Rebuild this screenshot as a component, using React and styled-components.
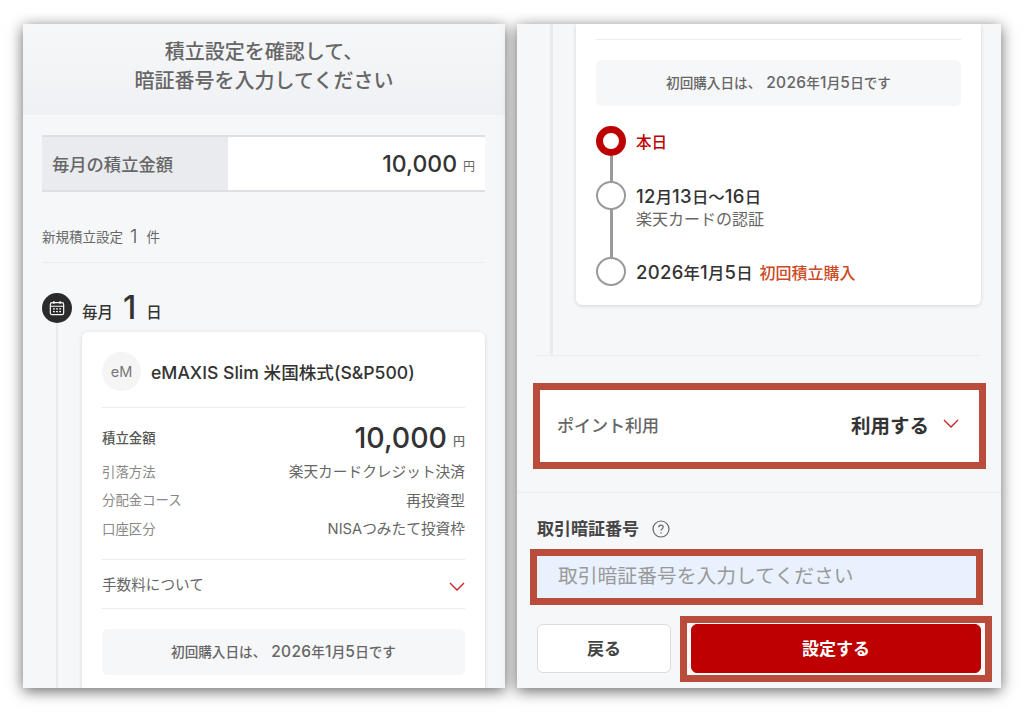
import React from "react";
import styled, { createGlobalStyle } from "styled-components";

const GlobalStyle = createGlobalStyle`
  html, body {
    margin: 0;
    padding: 0;
    background: #fff;
  }
  body {
    font-family: "Inter", "Noto Sans CJK JP", sans-serif;
    color: #333;
  }
  * {
    box-sizing: border-box;
  }
`;

const Page = styled.div`
  display: flex;
  gap: 12px;
  width: 1024px;
  height: 712px;
  padding: 24px 23px;
  overflow: hidden;
`;

const Panel = styled.div`
  position: relative;
  width: ${(p) => p.$width}px;
  height: 664px;
  flex: none;
  background: #f6f7f9;
  box-shadow: 0 3px 14px rgba(0, 0, 0, 0.6);
  overflow: hidden;
`;

const Shot = styled.div`
  height: 100%;
  overflow: hidden;
`;

const Header = styled.div`
  height: 91px;
  padding-top: 14px;
  text-align: center;
  font-size: 20px;
  line-height: 29px;
  font-weight: 500;
  color: #666;
  background: linear-gradient(#f6f7f9, #f0f1f4);
`;

const Body = styled.div`
  padding: 20px 20px 0 19px;
`;

const Summary = styled.div`
  display: flex;
  height: 57px;
  border-top: 2px solid #dedfe2;
  border-bottom: 2px solid #dedfe2;
  background: #fff;
`;

const SummaryLabel = styled.div`
  display: flex;
  align-items: center;
  width: 186px;
  padding-left: 10px;
  background: #e9ebee;
  font-size: 17.3px;
  font-weight: 500;
  color: #666;
`;

const SummaryValue = styled.div`
  flex: 1;
  display: flex;
  align-items: center;
  justify-content: flex-end;
  gap: 6px;
  padding-right: 10px;
`;

const Amount = styled.span`
  font-size: ${(p) => p.$size}px;
  font-weight: 500;
  color: #333;
`;

const Yen = styled.span`
  font-size: 12px;
  color: #666;
  margin-top: ${(p) => p.$top}px;
`;

const CountRow = styled.div`
  display: flex;
  align-items: center;
  height: 49px;
  margin-top: 22px;
  padding-bottom: 4px;
  border-bottom: 1px solid #ebecee;
  font-size: 13.5px;
  color: #666;
`;

const CountNum = styled.span`
  font-size: 19px;
  font-weight: 300;
  color: #555;
  margin: 0 9px 0 7px;
`;

const DayRow = styled.div`
  display: flex;
  align-items: center;
  margin-top: 30px;
  height: 30px;
`;

const DayIcon = styled.div`
  width: 30px;
  height: 30px;
  border-radius: 50%;
  background: #2b2b2b;
  display: flex;
  align-items: center;
  justify-content: center;
`;

const DayText = styled.span`
  font-size: 15.5px;
  font-weight: 500;
  color: #333;
  margin-top: 6px;
  margin-left: ${(p) => p.$left || 0}px;
`;

const DayNum = styled.span`
  font-size: 32px;
  font-weight: 500;
  line-height: 30px;
  color: #333;
  margin: 0 10px;
`;

const Rail = styled.div`
  margin-left: 14px;
  border-left: ${(p) => p.$width}px solid #e9eaec;
  padding: ${(p) => p.$top}px 0 ${(p) => p.$bottom}px ${(p) => p.$left}px;
`;

const Card = styled.div`
  background: #fff;
  border-radius: ${(p) => (p.$clipped ? "0 0 6px 6px" : "6px")};
  box-shadow: 0 1px 4px rgba(0, 0, 0, 0.14);
  padding: ${(p) => p.$top}px 20px 20px;
`;

const FundHead = styled.div`
  display: flex;
  align-items: center;
  gap: 10px;
  padding-bottom: 16px;
  border-bottom: 1px solid #ebecee;
`;

const Avatar = styled.div`
  width: 39px;
  height: 39px;
  border-radius: 50%;
  background: #f5f5f6;
  display: flex;
  align-items: center;
  justify-content: center;
  font-size: 14.5px;
  color: #777;
`;

const FundName = styled.div`
  font-size: 17.6px;
  font-weight: 500;
  color: #333;
`;

const Specs = styled.div`
  padding: 12.5px 0 17px;
  border-bottom: 1px solid #ebecee;
`;

const SpecRow = styled.div`
  display: flex;
  justify-content: space-between;
  align-items: center;
  height: ${(p) => (p.$strong ? 36 : 28.5)}px;
  padding-bottom: ${(p) => (p.$strong ? 3 : 0)}px;
  font-size: 13.4px;
  color: ${(p) => (p.$strong ? "#555" : "#888")};
  font-weight: ${(p) => (p.$strong ? 500 : 400)};
`;

const SpecValue = styled.span`
  font-size: 14.7px;
  color: #666;
`;

const Right = styled.span`
  display: flex;
  align-items: center;
  gap: 6px;
`;

const FeeRow = styled.div`
  display: flex;
  justify-content: space-between;
  align-items: center;
  height: 49px;
  padding-bottom: 2px;
  border-bottom: 1px solid #ebecee;
  font-size: 14.6px;
  color: #666;
`;

const Notice = styled.div`
  display: flex;
  align-items: center;
  justify-content: center;
  gap: 5px;
  height: 46px;
  margin-top: 20px;
  padding-bottom: 3px;
  border-radius: 6px;
  background: #f6f7f9;
  font-size: 13.6px;
  font-weight: 500;
  color: #666;
`;

const NoticeDate = styled.span`
  --digit-size: 15.5px;
`;

const Num = styled.span`
  font-size: var(--digit-size);
  letter-spacing: 0.3px;
`;

const Divider = styled.div`
  border-top: 1px solid #ebecee;
`;

const Steps = styled.div`
  margin-top: 20px;
`;

const Step = styled.div`
  display: flex;
  height: ${(p) => p.$height}px;
`;

const StepMark = styled.div`
  display: flex;
  flex-direction: column;
  align-items: center;
  width: 30px;
  margin-right: 10px;
`;

const Dot = styled.div`
  width: 30px;
  height: ${(p) => (p.$active ? 30 : 29)}px;
  flex: none;
  border-radius: 50%;
  background: #fff;
  border: ${(p) => (p.$active ? "7px solid #bd0000" : "2.5px solid #999")};
`;

const StepLine = styled.div`
  flex: 1;
  width: 3px;
  background: #999;
`;

const StepText = styled.div`
  padding-top: ${(p) => p.$top}px;
`;

const StepDate = styled.span`
  --digit-size: 18.5px;
  font-size: ${(p) => p.$size || 16.4}px;
  line-height: 22px;
  font-weight: 500;
  color: ${(p) => p.$color || "#333"};
  margin-right: ${(p) => p.$gap || 0}px;
`;

const StepNote = styled.div`
  font-size: 16px;
  line-height: 22px;
  color: #666;
`;

const PointSection = styled.div`
  margin: 0 20px 0 19px;
  border-bottom: 1px solid #ebecee;
`;

const PointRow = styled.div`
  position: relative;
  display: flex;
  align-items: center;
  justify-content: space-between;
  height: 72px;
  margin: 34px 0 0 23px;
  width: 439px;
  padding: 0 20px 4px 17px;
  background: #fff;
`;

const Frame = styled.div`
  position: absolute;
  inset: ${(p) => p.$inset};
  border: 7px solid #b94c3a;
  pointer-events: none;
`;

const PointLabel = styled.span`
  font-size: 17px;
  font-weight: 500;
  color: #666;
`;

const PointValue = styled.span`
  display: flex;
  align-items: center;
  gap: 14px;
  font-size: 19.5px;
  font-weight: 700;
  color: #333;
`;

const ChevronWrap = styled.span`
  display: flex;
  margin-top: ${(p) => p.$shift}px;
`;

const AuthSection = styled.div`
  margin-top: 30px;
  border-top: 1px solid #ebecee;
  padding: 23px 20px 0;
`;

const AuthLabel = styled.div`
  display: flex;
  align-items: center;
  gap: 13px;
  font-size: 17px;
  font-weight: 700;
  line-height: 26px;
  color: #444;
`;

const PinField = styled.div`
  position: relative;
  height: 42px;
  margin-top: 14px;
  margin-right: 5px;
  padding: 0 0 6px 21px;
  display: flex;
  align-items: center;
  background: #e8f1fd;
  font-size: 19.8px;
  color: #999;
`;

const Buttons = styled.div`
  display: flex;
  gap: 20px;
  margin-top: 26px;
`;

const Button = styled.div`
  position: relative;
  display: flex;
  align-items: center;
  justify-content: center;
  flex: ${(p) => (p.$primary ? 1 : "none")};
  width: ${(p) => (p.$primary ? "auto" : "134px")};
  height: 49px;
  padding-bottom: 2px;
  border-radius: 6px;
  border: 1px solid ${(p) => (p.$primary ? "#bd0000" : "#dcdcdc")};
  background: ${(p) => (p.$primary ? "#bd0000" : "#fff")};
  box-shadow: ${(p) => (p.$primary ? "0 0 0 6px #f9f9fa" : "none")};
  color: ${(p) => (p.$primary ? "#fff" : "#444")};
  font-size: 17px;
  font-weight: 700;
`;

const Chevron = ({ shift }) => (
  <ChevronWrap $shift={shift}>
    <svg width="16" height="9" viewBox="0 0 16 9" fill="none">
      <path d="M1 1l7 7 7-7" stroke="#c8201e" strokeWidth="1.3" />
    </svg>
  </ChevronWrap>
);

const CalendarIcon = () => (
  <svg width="16" height="16" viewBox="0 0 18 18" fill="none" stroke="#fff" strokeWidth="1.3">
    <rect x="1.5" y="3" width="15" height="13.5" rx="2" />
    <path d="M1.5 7h15M5.5 1v3.5M12.5 1v3.5" />
    <path d="M4.5 10h2M8 10h2M11.5 10h2M4.5 13h2M8 13h2M11.5 13h2" />
  </svg>
);

const HelpIcon = () => (
  <svg width="18" height="18" viewBox="0 0 18 18" fill="none" stroke="#666" strokeWidth="1.2">
    <circle cx="9" cy="9" r="8" />
    <path d="M6.8 7.2c0-1.3 1-2.1 2.2-2.1s2.2.8 2.2 2c0 1.8-2.2 1.7-2.2 3.6" />
    <path d="M9 12.2v1.2" />
  </svg>
);

// digits are set larger than the kana and kanji around them
const Digits = ({ text }) =>
  text.split(/(\d+)/).map((part, i) => (i % 2 ? <Num key={i}>{part}</Num> : part));

const FirstBuyNotice = () => (
  <Notice>
    初回購入日は、
    <NoticeDate>
      <Digits text="2026年1月5日です" />
    </NoticeDate>
  </Notice>
);

export default function App() {
  return (
    <>
      <GlobalStyle />
      <Page>
        <Panel $width={482}>
          <Shot>
            <Header>
              積立設定を確認して、
              <br />
              暗証番号を入力してください
            </Header>
            <Body>
              <Summary>
                <SummaryLabel>毎月の積立金額</SummaryLabel>
                <SummaryValue>
                  <Amount $size={23}>10,000</Amount>
                  <Yen $top={4}>円</Yen>
                </SummaryValue>
              </Summary>
              <CountRow>
                新規積立設定<CountNum>1</CountNum>件
              </CountRow>
              <DayRow>
                <DayIcon>
                  <CalendarIcon />
                </DayIcon>
                <DayText $left={10}>毎月</DayText>
                <DayNum>1</DayNum>
                <DayText>日</DayText>
              </DayRow>
              <Rail $width={2} $left={24} $top={9} $bottom={0}>
                <Card $top={20}>
                  <FundHead>
                    <Avatar>eM</Avatar>
                    <FundName>eMAXIS Slim 米国株式(S&amp;P500)</FundName>
                  </FundHead>
                  <Specs>
                    <SpecRow $strong>
                      積立金額
                      <Right>
                        <Amount $size={28.5}>10,000</Amount>
                        <Yen $top={6}>円</Yen>
                      </Right>
                    </SpecRow>
                    <SpecRow>
                      引落方法
                      <SpecValue>楽天カードクレジット決済</SpecValue>
                    </SpecRow>
                    <SpecRow>
                      分配金コース
                      <SpecValue>再投資型</SpecValue>
                    </SpecRow>
                    <SpecRow>
                      口座区分
                      <SpecValue>NISAつみたて投資枠</SpecValue>
                    </SpecRow>
                  </Specs>
                  <FeeRow>
                    手数料について
                    <Chevron shift={7} />
                  </FeeRow>
                  <FirstBuyNotice />
                </Card>
              </Rail>
            </Body>
          </Shot>
        </Panel>

        <Panel $width={484}>
          <Shot>
            <PointSection>
              <Rail $width={3} $left={23} $top={0} $bottom={50}>
                <Card $clipped $top={15}>
                  <Divider />
                  <FirstBuyNotice />
                  <Steps>
                    <Step $height={55}>
                      <StepMark>
                        <Dot $active />
                        <StepLine />
                      </StepMark>
                      <StepText $top={6}>
                        <StepDate $color="#bd0000" $size={15.6}>本日</StepDate>
                      </StepText>
                    </Step>
                    <Step $height={76}>
                      <StepMark>
                        <Dot />
                        <StepLine />
                      </StepMark>
                      <StepText $top={4}>
                        <StepDate>
                          <Digits text="12月13日〜16日" />
                        </StepDate>
                        <StepNote>楽天カードの認証</StepNote>
                      </StepText>
                    </Step>
                    <Step $height={28}>
                      <StepMark>
                        <Dot />
                      </StepMark>
                      <StepText $top={4}>
                        <StepDate $gap={7}>
                          <Digits text="2026年1月5日" />
                        </StepDate>
                        <StepDate $color="#cc4a25" $size={16}>初回積立購入</StepDate>
                      </StepText>
                    </Step>
                  </Steps>
                </Card>
              </Rail>
            </PointSection>
            <PointRow>
              <Frame $inset="-7px" />
              <PointLabel>ポイント利用</PointLabel>
              <PointValue>
                利用する
                <Chevron shift={-1} />
              </PointValue>
            </PointRow>
            <AuthSection>
              <AuthLabel>
                取引暗証番号
                <HelpIcon />
              </AuthLabel>
              <PinField>
                <Frame $inset="-7px" />
                取引暗証番号を入力してください
              </PinField>
              <Buttons>
                <Button>戻る</Button>
                <Button $primary>
                  <Frame $inset="-9px -12px -10px -12px" />
                  設定する
                </Button>
              </Buttons>
            </AuthSection>
          </Shot>
        </Panel>
      </Page>
    </>
  );
}
